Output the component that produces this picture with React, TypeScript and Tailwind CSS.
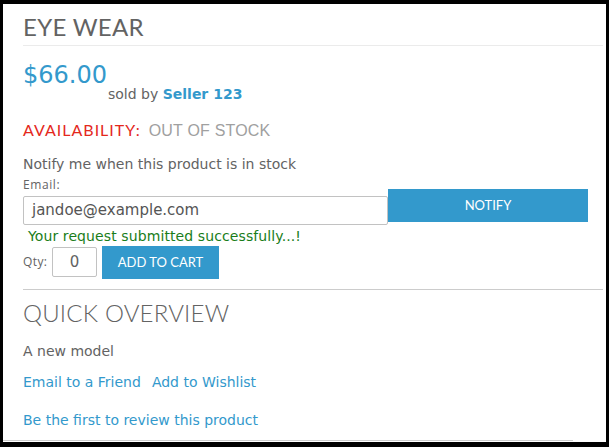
import React from "react";

export default function App() {
  return (
    <div className="w-[609px] h-[447px] bg-black pt-[4px] pl-[3px] pr-[3px] pb-[5px] box-border">
      <div className="bg-white h-full flex flex-col">
        <div className="pl-[20px] pr-[3px] flex flex-col">
          {/* Header */}
          <div className="h-[42px] pt-[9px] border-b border-[#ebebeb] box-border">
            <h1 className="font-['Lato',sans-serif] text-[24px] leading-[28px] text-[#636363] uppercase tracking-[0.3px]">
              Eye Wear
            </h1>
          </div>

          {/* Price */}
          <div className="flex items-start mt-[15px] h-[41px] font-['DejaVu_Sans',Verdana,sans-serif]">
            <span className="text-[24px] leading-[28px] text-[#3399cc]">$66.00</span>
            <span className="mt-[25px] ml-[1px] text-[14px] leading-[16px] text-[#636363]">
              sold by <a className="font-bold text-[#3399cc]">Seller 123</a>
            </span>
          </div>

          {/* Availability */}
          <div className="mt-[18px] h-[20px] flex items-baseline text-[16px] leading-[20px]">
            <span className="font-['Lato',sans-serif] text-[#e4281c] tracking-[1px]">AVAILABILITY:</span>
            <span className="ml-[8px] font-['Liberation_Sans',Arial,sans-serif] text-[#a0a0a0] tracking-[0.2px]">OUT OF STOCK</span>
          </div>

          <p className="mt-[15px] font-['DejaVu_Sans',Verdana,sans-serif] text-[14px] leading-[18px] text-[#636363]">
            Notify me when this product is in stock
          </p>

          {/* Email row */}
          <div className="mt-[5px] flex items-start">
            <div className="flex flex-col w-[365px]">
              <label className="font-['Open_Sans',sans-serif] text-[12px] leading-[14px] text-[#636363] font-medium tracking-[0.6px]">
                Email:
              </label>
              <div className="mt-[4px] h-[29px] w-[365px] border border-[#c2c2c2] rounded-[2px] box-border flex items-center pl-[8px] font-['DejaVu_Sans',Verdana,sans-serif] text-[15px] text-[#555]">
                jandoe@example.com
              </div>
            </div>
            <button className="mt-[11px] h-[33px] w-[200px] bg-[#3399cc] text-white font-['Lato',sans-serif] text-[13px] uppercase">
              Notify
            </button>
          </div>

          <p className="mt-[2px] pl-[5px] font-['DejaVu_Sans',Verdana,sans-serif] text-[14px] leading-[18px] text-[#1a7d1a] tracking-[0.1px]">
            Your request submitted successfully...!
          </p>

          {/* Qty row */}
          <div className="mt-[1px] flex items-start h-[33px]">
            <span className="mt-[9px] w-[29px] font-['Open_Sans',sans-serif] text-[12px] leading-[14px] text-[#636363] font-medium tracking-[0.4px]">
              Qty:
            </span>
            <div className="mt-[1px] h-[30px] w-[45px] border border-[#c2c2c2] rounded-[2px] box-border flex items-center justify-center font-['DejaVu_Sans',Verdana,sans-serif] text-[15px] text-[#636363]">
              0
            </div>
            <button className="ml-[5px] h-[33px] w-[117px] bg-[#3399cc] text-white font-['Lato',sans-serif] text-[13px] uppercase">
              Add to Cart
            </button>
          </div>

          <div className="mt-[10px] h-[1px] bg-[#cccccc]" />

          <h2 className="mt-[9px] font-['Lato',sans-serif] font-light text-[24px] leading-[28px] text-[#636363] uppercase tracking-[0.2px]">
            Quick Overview
          </h2>

          <p className="mt-[15px] font-['DejaVu_Sans',Verdana,sans-serif] text-[14px] leading-[18px] text-[#636363]">
            A new model
          </p>

          <div className="mt-[13px] flex font-['DejaVu_Sans',Verdana,sans-serif] text-[14px] leading-[18px] text-[#3399cc]">
            <a>Email to a Friend</a>
            <a className="ml-[11px]">Add to Wishlist</a>
          </div>

          <a className="mt-[20px] font-['DejaVu_Sans',Verdana,sans-serif] text-[14px] leading-[18px] text-[#3399cc]">
            Be the first to review this product
          </a>
        </div>
        <div className="mt-auto mb-[1px] h-[1px] w-[570px] bg-[#cccccc]" />
      </div>
    </div>
  );
}
